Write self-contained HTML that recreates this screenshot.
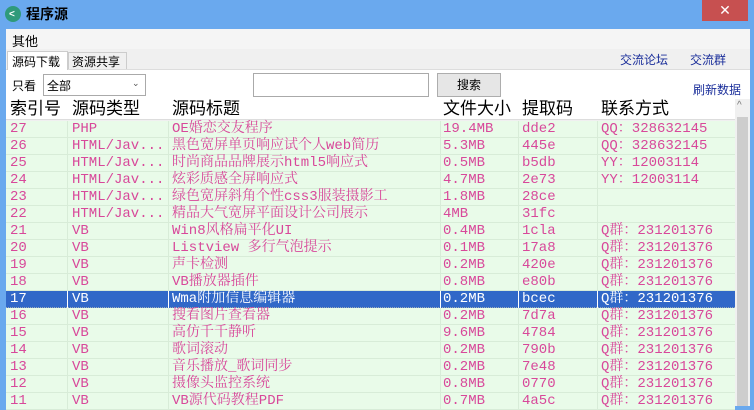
<!DOCTYPE html>
<html><head><meta charset="utf-8"><style>
*{margin:0;padding:0;box-sizing:border-box}
body{width:754px;height:406px;overflow:hidden;background:#6aa9ee;position:relative;font-family:"Liberation Sans","Noto Sans CJK SC",sans-serif;font-size:12px;color:#000}
.a{position:absolute;white-space:nowrap}
#client{position:absolute;left:6px;top:29px;width:744px;height:377px;background:#f0f0f0}
.row{position:absolute;left:6px;width:729px;height:17px;background:#e9fbe9;border-bottom:1px solid #d8ecd8;font-family:"Liberation Mono","Noto Serif CJK SC",monospace;font-size:14px;color:#d8489a;line-height:17px}
.row span{position:absolute;top:0}
.row .l{position:absolute;top:0;width:1px;height:17px;background:#d8ecd8}
.sel{background:#3168c8;color:#fff;border-bottom:1px dotted #9ab}
.sel .l{background:#fff}
</style></head><body>
<div class="a" style="left:5px;top:6px;width:16px;height:16px;border-radius:8px;background:#2f9a7a"></div>
<div class="a" style="left:9px;top:9px;color:#fff;font-size:10px;font-weight:bold">&lt;</div>
<div class="a" style="left:26px;top:4px;font-size:14px;font-weight:bold;color:#000">程序源</div>
<div class="a" style="left:702px;top:0;width:46px;height:21px;background:#c75050;color:#fff;text-align:center;font-size:14px;line-height:21px">✕</div>
<div id="client"></div>
<div class="a" style="left:6px;top:29px;width:744px;height:20px;background:#f5f5f5"></div>
<div class="a" style="left:12px;top:31px;font-size:13px">其他</div>
<div class="a" style="left:6px;top:69px;width:744px;height:30px;background:#fff;border-top:1px solid #ddd"></div>
<div class="a" style="left:7px;top:51px;width:61px;height:19px;background:#fff;border:1px solid #ccc;border-bottom:none"></div>
<div class="a" style="left:12px;top:53px;font-size:12px">源码下载</div>
<div class="a" style="left:68px;top:52px;width:59px;height:17px;background:#f0f0f0;border:1px solid #ccc;border-bottom:none"></div>
<div class="a" style="left:72px;top:53px;font-size:12px">资源共享</div>
<div class="a" style="left:620px;top:51px;font-size:12px;color:#1a2e9a">交流论坛</div>
<div class="a" style="left:690px;top:51px;font-size:12px;color:#1a2e9a">交流群</div>
<div class="a" style="left:12px;top:77px;font-size:12px">只看</div>
<div class="a" style="left:43px;top:74px;width:103px;height:22px;border:1px solid #aaa;background:#fff"></div>
<div class="a" style="left:47px;top:77px;font-size:12px">全部</div>
<div class="a" style="left:132px;top:78px;font-size:9px;color:#555">⌄</div>
<div class="a" style="left:253px;top:73px;width:176px;height:24px;border:1px solid #aaa;background:#fff"></div>
<div class="a" style="left:437px;top:73px;width:64px;height:24px;border:1px solid #adadad;background:#e6e6e6;text-align:center;line-height:22px;font-size:12px">搜索</div>
<div class="a" style="left:693px;top:81px;font-size:12px;color:#1a2e9a">刷新数据</div>
<div class="a" style="left:6px;top:99px;width:744px;height:21px;background:#fff;border-bottom:1px solid #ddd"></div>
<div class="a" style="left:10px;top:99px;font-size:17px;font-family:'Liberation Sans','Noto Sans CJK SC',sans-serif;line-height:20px">索引号</div>
<div class="a" style="left:72px;top:99px;font-size:17px;line-height:20px">源码类型</div>
<div class="a" style="left:172px;top:99px;font-size:17px;line-height:20px">源码标题</div>
<div class="a" style="left:443px;top:99px;font-size:17px;line-height:20px">文件大小</div>
<div class="a" style="left:522px;top:99px;font-size:17px;line-height:20px">提取码</div>
<div class="a" style="left:601px;top:99px;font-size:17px;line-height:20px">联系方式</div>
<div class="a" style="left:735px;top:99px;width:15px;height:307px;background:#f0f0f0"></div>
<div class="a" style="left:737px;top:100px;font-size:10px;color:#777">^</div>
<div class="a" style="left:737px;top:117px;width:11px;height:289px;background:#cdcdcd"></div>
<div id="rows"></div>
<script>
var d=[["27","PHP","OE婚恋交友程序","19.4MB","dde2","QQ：328632145"],
["26","HTML/Jav...","黑色宽屏单页响应试个人web简历","5.3MB","445e","QQ：328632145"],
["25","HTML/Jav...","时尚商品品牌展示html5响应式","0.5MB","b5db","YY：12003114"],
["24","HTML/Jav...","炫彩质感全屏响应式","4.7MB","2e73","YY：12003114"],
["23","HTML/Jav...","绿色宽屏斜角个性css3服装摄影工","1.8MB","28ce",""],
["22","HTML/Jav...","精品大气宽屏平面设计公司展示","4MB","31fc",""],
["21","VB","Win8风格扁平化UI","0.4MB","1cla","Q群：231201376"],
["20","VB","Listview 多行气泡提示","0.1MB","17a8","Q群：231201376"],
["19","VB","声卡检测","0.2MB","420e","Q群：231201376"],
["18","VB","VB播放器插件","0.8MB","e80b","Q群：231201376"],
["17","VB","Wma附加信息编辑器","0.2MB","bcec","Q群：231201376"],
["16","VB","搜看图片查看器","0.2MB","7d7a","Q群：231201376"],
["15","VB","高仿千千静听","9.6MB","4784","Q群：231201376"],
["14","VB","歌词滚动","0.2MB","790b","Q群：231201376"],
["13","VB","音乐播放_歌词同步","0.2MB","7e48","Q群：231201376"],
["12","VB","摄像头监控系统","0.8MB","0770","Q群：231201376"],
["11","VB","VB源代码教程PDF","0.7MB","4a5c","Q群：231201376"]];
var xs=[4,66,166,437,516,595],ls=[61,162,434,512,591],h="";
d.forEach(function(r,i){h+='<div class="row'+(i==10?' sel':'')+'" style="top:'+(121+i*17)+'px">';
ls.forEach(function(x){h+='<div class="l" style="left:'+x+'px"></div>'});
r.forEach(function(t,j){h+='<span style="left:'+xs[j]+'px">'+t+'</span>'});h+='</div>'});
document.getElementById('rows').innerHTML=h;
</script>
</body></html>
